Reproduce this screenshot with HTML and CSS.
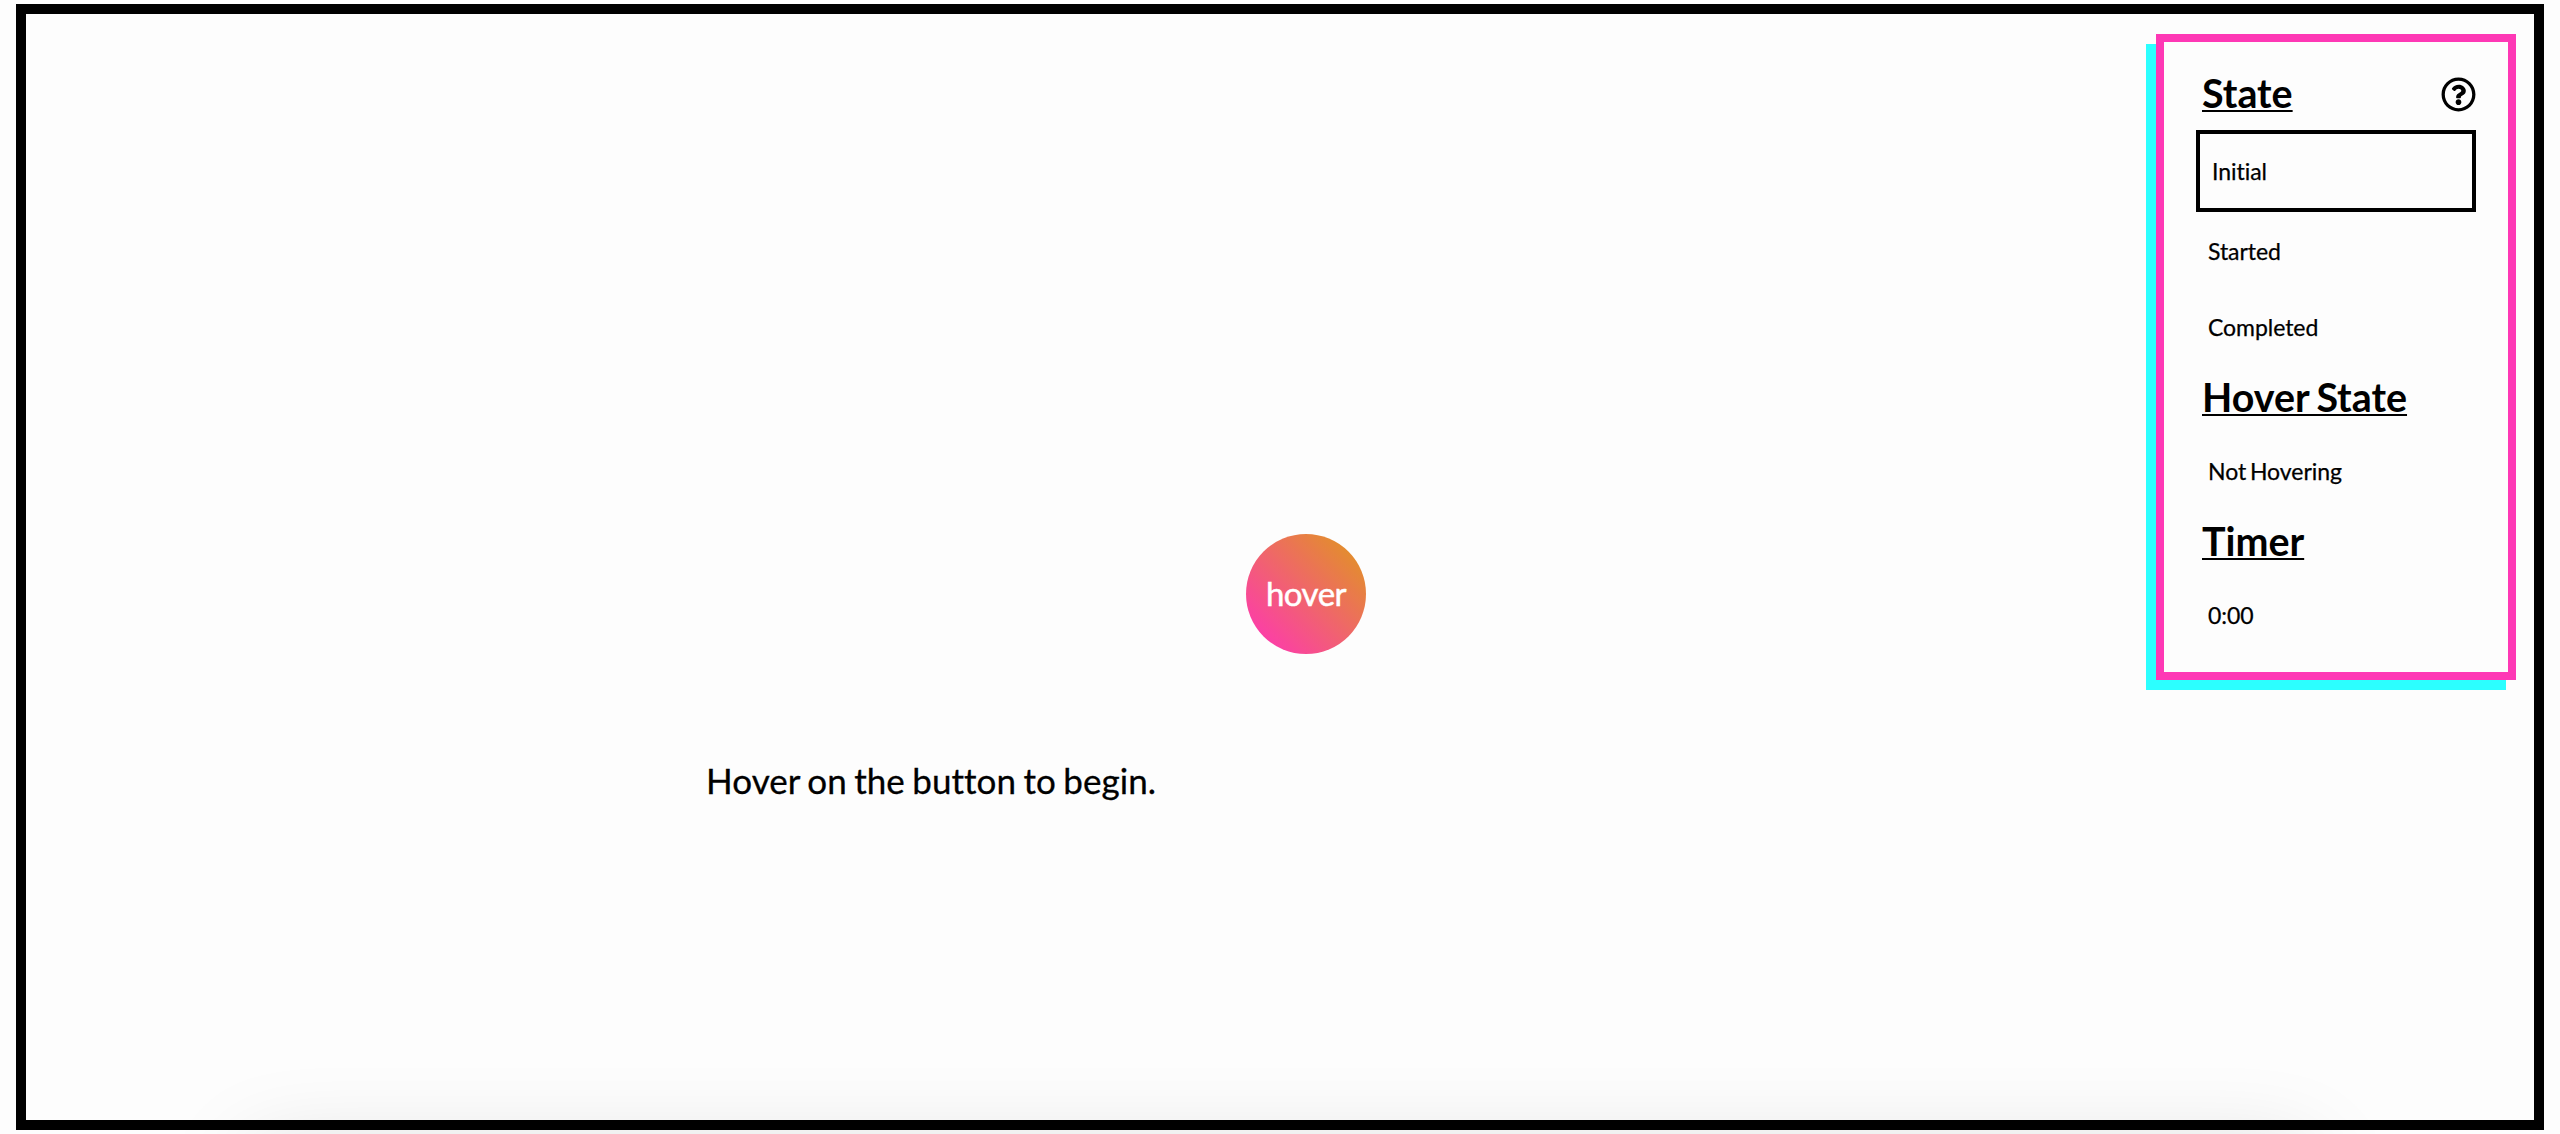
FILE: index.html
```html
<!DOCTYPE html>
<html lang="en">
<head>
<meta charset="utf-8">
<title>Hover</title>
<link rel="stylesheet" href="styles.css">
</head>
<body>
<div class="page">
<main class="frame">
  <section class="stage">
    <button class="hover-button">hover</button>
    <p class="prompt">Hover on the button to begin.</p>
  </section>
  <aside class="panel">
    <div class="heading-row">
      <h2 class="heading">State</h2>
      <svg class="help" viewBox="0 0 512 512">
        <path d="M256 8C119.043 8 8 119.083 8 256c0 136.997 111.043 248 248 248s248-111.003 248-248C504 119.083 392.957 8 256 8zm0 448c-110.532 0-200-89.431-200-200 0-110.495 89.472-200 200-200 110.491 0 200 89.471 200 200 0 110.53-89.431 200-200 200zm107.244-255.2c0 67.052-72.421 68.084-72.421 92.863V300c0 6.627-5.373 12-12 12h-45.647c-6.627 0-12-5.373-12-12v-8.659c0-35.745 27.1-50.034 47.579-61.516 17.561-9.845 28.324-16.541 28.324-29.579 0-17.246-21.999-28.693-39.784-28.693-23.189 0-33.894 10.977-48.942 29.969-4.057 5.12-11.46 6.071-16.666 2.124l-27.824-21.098c-5.107-3.872-6.251-11.066-2.644-16.363C184.846 131.491 214.94 112 261.794 112c49.071 0 101.45 38.304 101.45 88.8zM298 368c0 23.159-18.841 42-42 42s-42-18.841-42-42 18.841-42 42-42 42 18.841 42 42z"/>
      </svg>
    </div>
    <div class="item item-active">Initial</div>
    <div class="item">Started</div>
    <div class="item">Completed</div>
    <div class="heading-row"><h2 class="heading">Hover State</h2></div>
    <div class="item">Not Hovering</div>
    <div class="heading-row"><h2 class="heading">Timer</h2></div>
    <div class="item">0:00</div>
  </aside>
</main>
</div>
</body>
</html>
```
FILE: styles.css
```css
* {
  box-sizing: border-box;
}

body {
  margin: 0;
  background: #fdfdfd;
}

.page {
  position: relative;
  height: 1134px;
  padding: 4px 16px;
  overflow: hidden;
  color: #000;
  font-family: Lato, sans-serif;
  font-variant-ligatures: none;
}

/* soft shadow rising from below the page */
.page::after {
  content: "";
  position: absolute;
  left: 250px;
  right: 250px;
  top: 1152px;
  height: 100px;
  box-shadow: 0 0 90px rgba(0, 0, 0, 0.15);
}

.frame {
  position: relative;
  z-index: 1;
  display: flex;
  justify-content: space-between;
  align-items: flex-start;
  height: 1126px;
  border: 10px solid #000;
  padding: 20px 18px 0 0;
}

.stage {
  width: 1200px;
  margin-left: 680px;
  padding-top: 500px;
}

.hover-button {
  display: block;
  width: 120px;
  height: 120px;
  margin: 0 auto 0 540px;
  padding: 0 0 2px;
  border: 0;
  border-radius: 50%;
  background: linear-gradient(45deg, #fe38b1 7%, #e29029 90%);
  color: #fff;
  font: 33px/40px Lato, sans-serif;
  letter-spacing: -0.5px;
  -webkit-text-stroke: 0.5px #fff;
}

.prompt {
  margin: 104px 0 0;
  font-size: 35px;
  line-height: 44px;
  letter-spacing: 0.05px;
  word-spacing: -1.6px;
  -webkit-text-stroke: 0.3px #000;
}

.panel {
  width: 360px;
  height: 646px;
  padding: 19px 32px 0;
  border: 8px solid #fe38b5;
  background: #fdfdfd;
  box-shadow: -10px 10px 0 #2cffff;
}

.heading-row {
  display: flex;
  align-items: center;
  justify-content: space-between;
  height: 68px;
  padding: 0 0 5px 6px;
}

.heading {
  margin: 0;
  font-size: 39.4px;
  line-height: 48px;
  font-weight: 700;
  word-spacing: -2px;
  text-decoration: underline;
  text-decoration-thickness: 2px;
  text-underline-offset: 2px;
  text-decoration-skip-ink: none;
}

.help {
  width: 35px;
  height: 35px;
  margin-top: 4px;
}

.item {
  display: flex;
  align-items: center;
  height: 76px;
  padding-left: 12px;
  font-size: 23px;
  line-height: 30px;
  letter-spacing: -0.05px;
  word-spacing: -2px;
  -webkit-text-stroke: 0.25px #000;
}

.item-active {
  height: 82px;
  margin: 1px 0;
  border: 4px solid #000;
}
```
